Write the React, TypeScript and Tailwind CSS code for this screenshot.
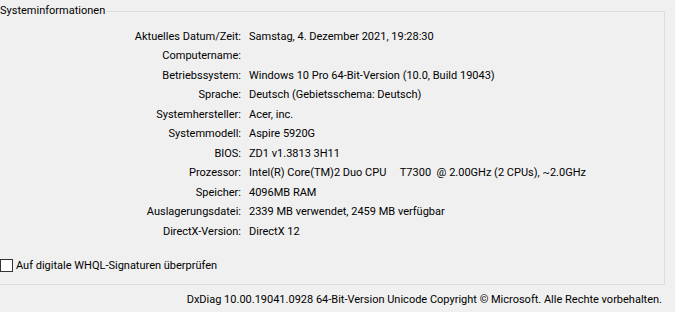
import React from "react";

const rows: [string, string][] = [
  ["Aktuelles Datum/Zeit:", "Samstag, 4. Dezember 2021, 19:28:30"],
  ["Computername:", ""],
  ["Betriebssystem:", "Windows 10 Pro 64-Bit-Version (10.0, Build 19043)"],
  ["Sprache:", "Deutsch (Gebietsschema: Deutsch)"],
  ["Systemhersteller:", "Acer, inc."],
  ["Systemmodell:", "Aspire 5920G"],
  ["BIOS:", "ZD1 v1.3813 3H11"],
  ["Prozessor:", "Intel(R) Core(TM)2 Duo CPU     T7300  @ 2.00GHz (2 CPUs), ~2.0GHz"],
  ["Speicher:", "4096MB RAM"],
  ["Auslagerungsdatei:", "2339 MB verwendet, 2459 MB verfügbar"],
  ["DirectX-Version:", "DirectX 12"],
];

export default function App() {
  return (
    <div className="w-[675px] h-[312px] bg-[#f0f0f0] text-black text-[11px] leading-[16px] font-['Roboto','Liberation_Sans',sans-serif] overflow-hidden pt-[3px]">
      <fieldset className="ml-[-8px] w-[673px] h-[282px] border border-[#dcdcdc]">
        <legend className="ml-[7px] pr-[2px]">Systeminformationen</legend>

        {/* info rows */}
        <div className="grid grid-cols-[256px_1fr] mt-[8px]">
          {rows.map(([label, value]) => (
            <React.Fragment key={label}>
              <div className="h-[19.5px] flex items-center justify-end pr-[8px]">{label}</div>
              <div className="h-[19.5px] flex items-center whitespace-pre">{value}</div>
            </React.Fragment>
          ))}
        </div>

        <label className="flex items-center gap-[3px] ml-[7px] mt-[16px]">
          <span className="w-[13px] h-[13px] border border-[#333] bg-white" />
          <span>Auf digitale WHQL-Signaturen überprüfen</span>
        </label>
      </fieldset>

      <div className="flex justify-end pr-[13px] mt-[7px]">
        DxDiag 10.00.19041.0928 64-Bit-Version Unicode Copyright © Microsoft. Alle Rechte vorbehalten.
      </div>
    </div>
  );
}
